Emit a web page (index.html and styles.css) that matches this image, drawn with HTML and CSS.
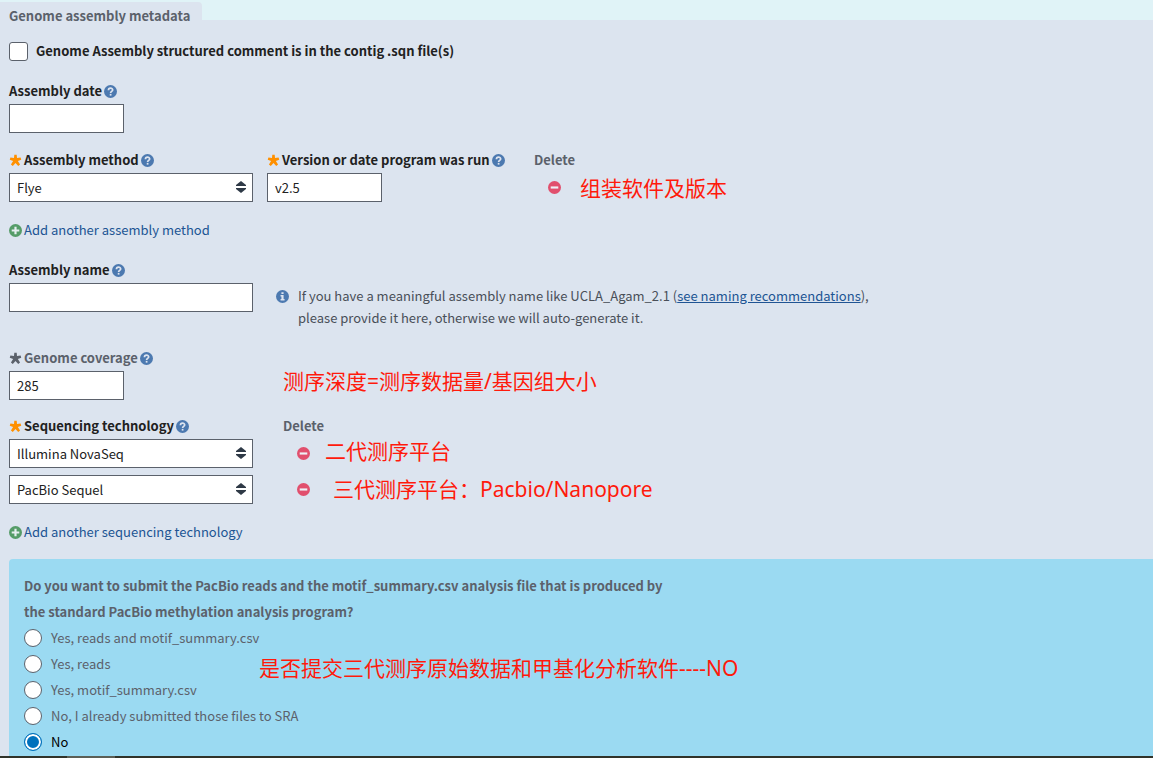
FILE: index.html
```html
<!DOCTYPE html>
<html lang="en">
<head>
<meta charset="utf-8">
<title>Genome assembly metadata</title>
<link rel="stylesheet" href="styles.css">
</head>
<body>
<svg class="sprite" aria-hidden="true">
  <symbol id="help" viewBox="0 0 12 12"><circle cx="6" cy="6" r="6" fill="#4c79b0"/><path d="M4.100 4.800C4.100 2.200 8 2.300 8 4.600 8 5.900 6.100 5.900 6.100 7.300" fill="none" stroke="#dde4ef" stroke-width="1.600"/><rect x="5.300" y="8.200" width="1.600" height="1.600" fill="#dde4ef"/></symbol>
  <symbol id="info" viewBox="0 0 12 12"><circle cx="6" cy="6" r="6" fill="#4c79b0"/><path d="M5 2h2v1.700H5zM4.200 4.700H7v3.600h.9v1.400H4.200V8.300H5V6h-.8z" fill="#dde4ef"/></symbol>
  <symbol id="plus" viewBox="0 0 12 12"><circle cx="6" cy="6" r="6" fill="#559c68"/><path d="M6 2.500v7M2.500 6h7" stroke="#e6eef0" stroke-width="2"/></symbol>
  <symbol id="minus" viewBox="0 0 12 12"><circle cx="6" cy="6" r="6" fill="#e14f6d"/><path d="M2.500 6h7" stroke="#eef0f6" stroke-width="2"/></symbol>
  <symbol id="star" viewBox="0 0 12 12"><path d="M4.900.8h2.200l.3 3 3.300-.5.600 1.900-3.100 1.200 2 3.400-1.700 1.300L6 8.400l-2.500 2.700-1.700-1.300 2-3.400L.7 5.200l.6-1.900 3.300.5z" fill="currentColor"/></symbol>
  <symbol id="sort" viewBox="0 0 12 12"><path d="M6 0l5 4v1H1V4zM6 12l5-4V7H1v1z" fill="#2e3946"/></symbol>
</svg>
<main class="page">
  <div class="top"><h1 class="tab">Genome assembly metadata</h1></div>
  <form class="panel">
    <label class="check-row"><input class="check" type="checkbox">Genome Assembly structured comment is in the contig .sqn file(s)</label>

    <div class="field">
      <div class="label-row"><label for="date">Assembly date</label><svg class="icon"><use href="#help"/></svg></div>
      <input class="control short" id="date" type="text">
    </div>

    <div class="method-grid">
      <div>
        <div class="label-row"><svg class="icon star"><use href="#star"/></svg><label for="method">Assembly method</label><svg class="icon"><use href="#help"/></svg></div>
        <div class="select-box"><select class="control" id="method"><option>Flye</option></select><svg class="sort"><use href="#sort"/></svg></div>
      </div>
      <div>
        <div class="label-row"><svg class="icon star"><use href="#star"/></svg><label for="version">Version or date program was run</label><svg class="icon"><use href="#help"/></svg></div>
        <input class="control short" id="version" type="text" value="v2.5">
      </div>
      <div>
        <div class="label-row muted">Delete</div>
        <div class="delete-row"><button class="delete" type="button" aria-label="Delete method"><svg class="icon"><use href="#minus"/></svg></button><span class="note" lang="zh">组装软件及版本</span></div>
      </div>
    </div>
    <a class="add" href="#"><svg class="icon"><use href="#plus"/></svg>Add another assembly method</a>

    <div class="name-row">
      <div class="column">
        <div class="label-row"><label for="name">Assembly name</label><svg class="icon"><use href="#help"/></svg></div>
        <input class="control" id="name" type="text">
      </div>
      <div class="hint"><svg class="icon"><use href="#info"/></svg><p>If you have a meaningful assembly name like UCLA_Agam_2.1 (<a href="#">see naming recommendations</a>),<br>please provide it here, otherwise we will auto-generate it.</p></div>
    </div>

    <div class="coverage-row">
      <div class="column">
        <div class="label-row muted"><svg class="icon"><use href="#star"/></svg><label for="coverage">Genome coverage</label><svg class="icon"><use href="#help"/></svg></div>
        <input class="control short" id="coverage" type="text" value="285">
      </div>
      <span class="note" lang="zh">测序深度=测序数据量/基因组大小</span>
    </div>

    <div class="tech-row">
      <div class="column">
        <div class="label-row"><svg class="icon star"><use href="#star"/></svg><label for="tech1">Sequencing technology</label><svg class="icon"><use href="#help"/></svg></div>
        <div class="stack">
          <div class="select-box"><select class="control" id="tech1"><option>Illumina NovaSeq</option></select><svg class="sort"><use href="#sort"/></svg></div>
          <div class="select-box"><select class="control" aria-label="Second sequencing technology"><option>PacBio Sequel</option></select><svg class="sort"><use href="#sort"/></svg></div>
        </div>
      </div>
      <div>
        <div class="label-row muted">Delete</div>
        <div class="stack">
          <div class="delete-row near"><button class="delete" type="button" aria-label="Delete Illumina NovaSeq"><svg class="icon"><use href="#minus"/></svg></button><span class="note" lang="zh">二代测序平台</span></div>
          <div class="delete-row far"><button class="delete" type="button" aria-label="Delete PacBio Sequel"><svg class="icon"><use href="#minus"/></svg></button><span class="note" lang="zh">三代测序平台：Pacbio/Nanopore</span></div>
        </div>
      </div>
    </div>
    <a class="add" href="#"><svg class="icon"><use href="#plus"/></svg>Add another sequencing technology</a>

    <fieldset class="question">
      <legend>Do you want to submit the PacBio reads and the motif_summary.csv analysis file that is produced by<br>the standard PacBio methylation analysis program?</legend>
      <label class="choice"><input type="radio" name="reads">Yes, reads and motif_summary.csv</label>
      <label class="choice"><input type="radio" name="reads">Yes, reads</label>
      <label class="choice"><input type="radio" name="reads">Yes, motif_summary.csv</label>
      <label class="choice"><input type="radio" name="reads">No, I already submitted those files to SRA</label>
      <label class="choice chosen"><input type="radio" name="reads" checked>No</label>
      <span class="note overlay" lang="zh">是否提交三代测序原始数据和甲基化分析软件----NO</span>
    </fieldset>
  </form>
  <div class="scroll"><div class="thumb"></div></div>
</main>
</body>
</html>
```
FILE: styles.css
```css
* { box-sizing: border-box; }
body {
  margin: 0;
  font: 13px/22px "Noto Sans CJK SC", "Open Sans", sans-serif;
  color: #212121;
  background: #dce4ef;
}
.sprite { position: absolute; width: 0; height: 0; }
.page { display: flex; flex-direction: column; min-height: 100vh; }
.top { height: 20px; padding-top: 2px; background: #e0f3f7; }
.tab {
  width: 202px;
  height: 18px;
  margin: 0;
  padding-left: 9px;
  border-top-right-radius: 4px;
  background: #dce4ef;
  color: #5b616b;
  font-size: 13px;
  line-height: 28px;
}
.panel { flex: 1; display: flex; flex-direction: column; padding: 20px 0 0 9px; }
.icon { width: 13px; height: 13px; flex: none; }
.star { color: #ff9000; }
.muted { color: #5b616b; }
.check-row { display: flex; align-items: center; gap: 8px; height: 22px; font-weight: bold; }
.check {
  appearance: none;
  width: 19px;
  height: 19px;
  margin: 0;
  border: 1px solid #5b616b;
  border-radius: 3px;
  background: #fff;
}
.field { margin-top: 18px; }
.label-row { display: flex; align-items: center; gap: 2px; height: 24px; padding-bottom: 2px; font-weight: bold; }
.control {
  display: block;
  appearance: none;
  width: 100%;
  height: 29px;
  margin: 0;
  padding: 0 7px;
  border: 1px solid #5b616b;
  border-radius: 0;
  background: #fff;
  color: #212121;
  font: inherit;
}
.short { width: 115px; }
.select-box { position: relative; }
.sort { position: absolute; top: 8px; right: 6px; width: 12px; height: 12px; pointer-events: none; }
.method-grid { display: grid; grid-template-columns: 244px 253px 1fr; gap: 14px; margin-top: 16px; }
.delete-row { display: flex; align-items: center; gap: 19px; height: 29px; padding-left: 14px; }
.near { gap: 15px; }
.near .note { padding-bottom: 6px; }
.far { gap: 23px; }
.far .note { padding-bottom: 2px; }
.delete { display: flex; padding: 0; border: 0; background: none; }
.note { color: #ff1a0c; font: 21px/28px "Noto Sans", "Noto Sans CJK SC", sans-serif; white-space: nowrap; }
.add { display: flex; align-items: center; align-self: flex-start; gap: 2px; height: 22px; margin-top: 17px; color: #205493; text-decoration: none; }
.name-row { display: flex; gap: 23px; margin-top: 18px; }
.column { width: 244px; flex: none; }
.hint { display: flex; gap: 9px; padding-top: 26px; color: #494f58; }
.hint p { margin: 0; }
.hint .icon { margin-top: 5px; }
.hint a { color: #205493; }
.coverage-row { display: flex; align-items: flex-end; gap: 30px; margin-top: 18px; }
.coverage-row .note { padding-bottom: 5px; }
.tech-row { display: flex; gap: 30px; margin-top: 15px; }
.stack { display: flex; flex-direction: column; gap: 7px; }
.question {
  position: relative;
  flex: 1;
  min-width: 0;
  margin: 16px 0 0;
  padding: 14px 15px 0;
  border: 0;
  border-top-left-radius: 4px;
  background: #9bdaf2;
  color: #5b616b;
  line-height: 26px;
}
.question legend { float: left; width: 100%; padding: 0; font-weight: bold; }
.choice { display: flex; align-items: center; clear: both; gap: 9px; height: 26px; }
.choice input {
  appearance: none;
  width: 18px;
  height: 18px;
  margin: 0;
  border: 1px solid #5b616b;
  border-radius: 50%;
  background: #fff;
}
.choice input:checked { border: 1px solid #0071bc; background: #0071bc; box-shadow: inset 0 0 0 2px #fff; }
.chosen { color: #000; }
.overlay { position: absolute; left: 250px; top: 95px; }
.scroll { height: 2px; background: #30332a; }
.thumb { width: 48px; height: 2px; margin-left: 67px; background: #5b5f56; }
```
